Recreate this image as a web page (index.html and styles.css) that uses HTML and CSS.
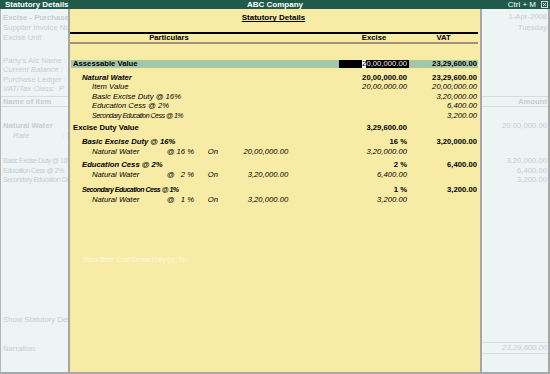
FILE: index.html
```html
<!DOCTYPE html>
<html lang="en">

<head>
    <meta charset="UTF-8">
    <meta name="viewport" content="width=device-width, initial-scale=1.0">
    <title>Statutory Details</title>

    <link rel="stylesheet" href="styles.css">
</head>

<body>

    <div class="titlebar">
        <span class="tb-left">Statutory Details</span>
        <span class="tb-mid">ABC Company</span>
        <span class="tb-right">Ctrl + M
            <svg class="close" width="7" height="7" viewBox="0 0 7 7">
                <rect x="0.5" y="0.5" width="6" height="6" fill="none" stroke="#d8d8d8" stroke-width="1" />
                <path d="M2 2 L5 5 M5 2 L2 5" stroke="#e8e8e8" stroke-width="1" />
            </svg>
        </span>
    </div>

    <div class="screen">

        <!-- voucher behind the popup: left part -->
        <div class="side side-left">
            <div class="bg-group g-top">
                <p class="bg b">Excise - Purchase</p>
                <p class="bg">Supplier Invoice No</p>
                <p class="bg">Excise Unit</p>
            </div>
            <div class="bg-group g-party">
                <p class="bg">Party's A/c Name :</p>
                <p class="bg i">Current Balance :</p>
                <p class="bg">Purchase Ledger :</p>
                <p class="bg i">VAT/Tax Class: &nbsp;P</p>
            </div>
            <div class="bg-head"><p class="bg b">Name of Item</p></div>
            <div class="bg-group g-item">
                <p class="bg b">Natural Water</p>
                <p class="bg rate"><i>Rate</i><span>: 1</span></p>
            </div>
            <div class="bg-group g-duty">
                <p class="bg sm">Basic Excise Duty @ 16%</p>
                <p class="bg sm">Education Cess @ 2%</p>
                <p class="bg sm">Secondary Education Cess @ 1%</p>
            </div>
            <p class="bg show">Show Statutory Details</p>
            <div class="bg-foot"><p class="bg">Narration:</p></div>
        </div>

        <!-- the popup -->
        <div class="panel">
            <div class="panel-title"><span>Statutory Details</span></div>
            <div class="rule-black"></div>
            <div class="row head">
                <span class="part">Particulars</span>
                <span>Excise</span>
                <span>VAT</span>
            </div>
            <div class="rule-brown"></div>

            <div class="row band">
                <span class="part b">Assessable Value</span>
                <span class="num cur"><i class="caret">2</i>0,00,000.00</span>
                <span class="num b">23,29,600.00</span>
            </div>

            <div class="group g-first">
                <div class="row">
                    <span class="part lv1 b i">Natural Water</span>
                    <span class="num b">20,00,000.00</span>
                    <span class="num b">23,29,600.00</span>
                </div>
                <div class="row">
                    <span class="part lv2 i">Item Value</span>
                    <span class="num i">20,00,000.00</span>
                    <span class="num i">20,00,000.00</span>
                </div>
                <div class="row">
                    <span class="part lv2 i">Basic Excise Duty @ 16%</span>
                    <span class="num"></span>
                    <span class="num i">3,20,000.00</span>
                </div>
                <div class="row">
                    <span class="part lv2 i">Education Cess @ 2%</span>
                    <span class="num"></span>
                    <span class="num i">6,400.00</span>
                </div>
                <div class="row">
                    <span class="part lv2 i sm">Secondary Education Cess @ 1%</span>
                    <span class="num"></span>
                    <span class="num i">3,200.00</span>
                </div>
            </div>

            <div class="row g-duty-total">
                <span class="part b">Excise Duty Value</span>
                <span class="num b">3,29,600.00</span>
                <span class="num"></span>
            </div>

            <div class="group g-basic">
                <div class="row">
                    <span class="part lv1 b i">Basic Excise Duty @ 16%</span>
                    <span class="num b">16 %</span>
                    <span class="num b">3,20,000.00</span>
                </div>
                <div class="row">
                    <span class="part lv2 line i">
                        <span>Natural Water</span><span>@</span><span class="r">16 %</span><span class="on">On</span><span class="r">20,00,000.00</span>
                    </span>
                    <span class="num i">3,20,000.00</span>
                    <span class="num"></span>
                </div>
            </div>

            <div class="group g-edu">
                <div class="row">
                    <span class="part lv1 b i">Education Cess @ 2%</span>
                    <span class="num b">2 %</span>
                    <span class="num b">6,400.00</span>
                </div>
                <div class="row">
                    <span class="part lv2 line i">
                        <span>Natural Water</span><span>@</span><span class="r">2 %</span><span class="on">On</span><span class="r">3,20,000.00</span>
                    </span>
                    <span class="num i">6,400.00</span>
                    <span class="num"></span>
                </div>
            </div>

            <div class="group g-sec">
                <div class="row">
                    <span class="part lv1 b i sm">Secondary Education Cess @ 1%</span>
                    <span class="num b">1 %</span>
                    <span class="num b">3,200.00</span>
                </div>
                <div class="row">
                    <span class="part lv2 line i">
                        <span>Natural Water</span><span>@</span><span class="r">1 %</span><span class="on">On</span><span class="r">3,20,000.00</span>
                    </span>
                    <span class="num i">3,200.00</span>
                    <span class="num"></span>
                </div>
            </div>

            <p class="hint">Stock Brief : Cost Centre Entry (s) : No</p>
        </div>

        <!-- voucher behind the popup: right part -->
        <div class="side side-right">
            <div class="bg-group g-top">
                <p class="bg">1-Apr-2008</p>
                <p class="bg">Tuesday</p>
            </div>
            <div class="bg-head"><p class="bg b">Amount</p></div>
            <div class="bg-group g-item">
                <p class="bg">20,00,000.00</p>
            </div>
            <div class="bg-group g-duty">
                <p class="bg">3,20,000.00</p>
                <p class="bg">6,400.00</p>
                <p class="bg">3,200.00</p>
            </div>
            <div class="bg-foot total"><p class="bg i">23,29,600.00</p></div>
        </div>

    </div>

</body>

</html>
```

FILE: styles.css
```css
body {
    margin: 0;
    width: 550px;
    height: 374px;
    overflow: hidden;

    font-family: "Liberation Sans", Arial, sans-serif;
    font-size: 7.7px;
    color: #000;
    background-color: #edf4f4;
}

p {
    margin: 0;
}

.b {
    font-weight: bold;
}

.i {
    font-style: italic;
}

/* condensed text, as Tally squeezes long captions */
.sm {
    font-size: 7px;
    letter-spacing: -0.5px;
}

/* top bar */
.titlebar {
    display: grid;
    grid-template-columns: 1fr auto 1fr;
    align-items: center;
    height: 9px;
    line-height: 9px;
    padding: 0 2px 0 5px;

    color: #fff;
    font-size: 8px;
    font-weight: bold;
    background-color: #1f5a4a;
}

.tb-mid {
    padding-right: 3px;
}

.tb-right {
    justify-self: end;
    display: flex;
    align-items: center;
    gap: 5px;
    font-weight: normal;
}

.close {
    display: block;
}

/* screen with the voucher and the popup */
.screen {
    display: grid;
    grid-template-columns: 67px 414px 66px;
    height: 363px;

    border-left: 1px solid #b4b4b4;
    border-right: 2px solid #a8a8a8;
    border-bottom: 2px solid #a8a8a8;
}

.side {
    display: flex;
    flex-direction: column;
    overflow: hidden;
    white-space: nowrap;
    color: #c6cece;
}

.bg {
    height: 10px;
    line-height: 10px;
    padding-left: 2px;
}

.side-right .bg {
    text-align: right;
    padding: 0 1px 0 0;
}

.g-top {
    padding-top: 4.3px;
}

.side-right .g-top {
    padding-top: 3.3px;
}

.side-right .g-top .bg:last-child {
    margin-top: 1px;
}

.g-party {
    margin-top: 12.7px;
}

.g-party .bg {
    height: 9.3px;
    line-height: 9.3px;
}

.bg-head {
    margin-top: 3px;
    border-top: 1px solid #d6dddd;
    border-bottom: 1px solid #d6dddd;
}

.side-right .bg-head {
    margin-top: 62.9px;
}

.bg-head .bg {
    height: 9px;
    line-height: 9px;
}

.g-item {
    margin-top: 14.2px;
}

.rate i {
    display: inline-block;
    width: 49px;
    padding-left: 10px;
}

.g-duty {
    margin-top: 15px;
}

.side-right .g-duty {
    margin-top: 25px;
}

.g-duty .bg {
    height: 9.2px;
    line-height: 9.2px;
}

.show {
    margin-top: 131px;
}

.bg-foot {
    margin-top: 19.3px;
}

.bg-foot.total {
    margin-top: 158px;
    border-top: 1px solid #d6dddd;
    border-bottom: 1px solid #d6dddd;
}

/* the popup */
.panel {
    display: flex;
    flex-direction: column;

    background-color: #f7eba6;
    border-left: 2px solid #a6a6a6;
    border-right: 2px solid #a6a6a6;
}

.panel-title {
    margin-top: 4.3px;
    height: 10px;
    line-height: 10px;
    padding-right: 3px;
    text-align: center;
    font-size: 8px;
    font-weight: bold;
}

.panel-title span {
    text-decoration: underline;
}

.rule-black {
    height: 2px;
    margin: 9px 2px 0 0;
    background-color: #000;
}

.rule-brown {
    height: 2px;
    margin-right: 2px;
    background-color: #a09570;
}

.row {
    display: grid;
    grid-template-columns: 269px 70px 69px;
    height: 9.5px;
    line-height: 9.5px;
    padding-right: 2px;
    white-space: nowrap;
}

.row .num {
    text-align: right;
    padding-right: 1px;
}

.row .num:nth-child(2) {
    padding-right: 2px;
}

.head {
    height: 8px;
    line-height: 8px;
    font-weight: bold;
    text-align: center;
}

.head .part {
    padding-right: 74px;
}

.part {
    padding-left: 3px;
}

.lv1 {
    padding-left: 12px;
}

.lv2 {
    padding-left: 22px;
}

/* current line of the report */
.band {
    grid-template-columns: 268px 70px 69px;
    height: 8px;
    line-height: 8px;
    margin: 15.4px 2px 0 1px;
    padding-right: 0;
    background-color: #a6c7a6;
}

.band .part {
    padding-left: 2px;
}

.cur {
    color: #e8e8e8;
    background-color: #000;
}

.caret {
    font-style: normal;
    color: #000;
    background-color: #fff;
}

.g-first {
    margin-top: 4.9px;
}

.g-duty-total {
    margin-top: 2.5px;
}

.g-basic {
    margin-top: 5px;
}

.g-edu {
    margin-top: 4.2px;
}

.g-sec {
    margin-top: 6px;
}

/* item line: name, @ rate, On amount */
.line {
    display: grid;
    grid-template-columns: 74.7px 8px 19.3px 43.7px 50.6px;
}

.line .r {
    text-align: right;
}

.line .on {
    padding-left: 13.7px;
}

.hint {
    margin-top: 50.3px;
    padding-left: 13px;
    height: 10px;
    line-height: 10px;
    font-size: 7px;
    letter-spacing: -0.4px;
    color: #fdf8de;
}
```
